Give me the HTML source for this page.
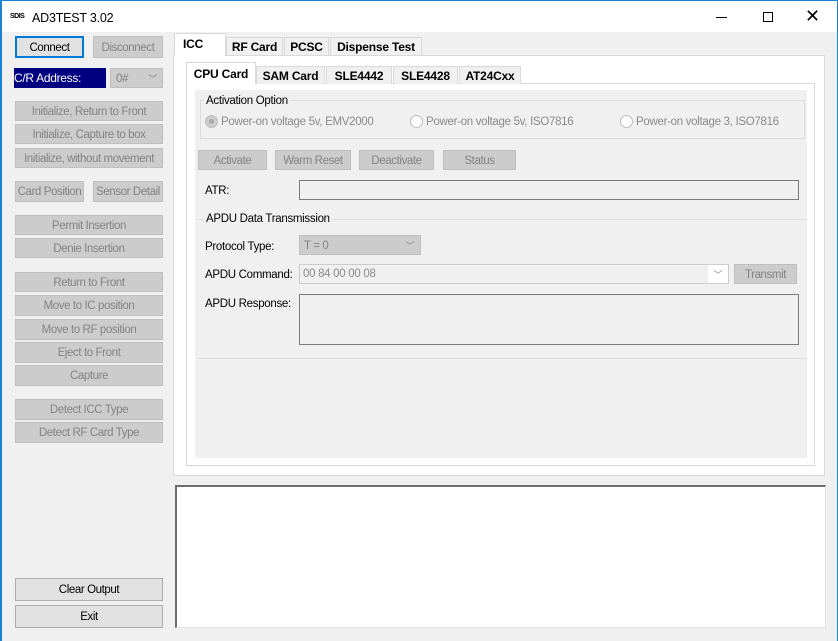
<!DOCTYPE html><html><head><style>
*{margin:0;padding:0;box-sizing:border-box}
body{width:838px;height:641px;background:#f0f0f0;font-family:"Liberation Sans",sans-serif;font-size:12px;position:relative;overflow:hidden;color:#000;white-space:nowrap}
.a{position:absolute}
.b{position:absolute;background:#cccccc;border:1px solid #bfbfbf;color:#838383;text-align:center;display:flex;align-items:center;justify-content:center;font-size:11.5px;letter-spacing:-0.4px;padding-top:1px}
.e{background:#e1e1e1;border-color:#adadad;color:#000}
.t{position:absolute;background:#f0f0f0;border:1px solid #d9d9d9;border-bottom:none;font-weight:bold;font-size:12px;letter-spacing:-0.2px;display:flex;align-items:center;justify-content:center}
.s{background:#fff;font-weight:bold}
.l{position:absolute;font-size:11.5px;letter-spacing:-0.3px;margin-top:2px}
.r{position:absolute;width:13px;height:13px;border-radius:50%;border:1px solid #bcbcbc;background:#fff}
.g{color:#8a8a8a}
</style></head><body>
<div class="a" style="left:0;top:0;width:838px;height:641px;border:1px solid #1883d7;border-left:2px solid #1883d7;border-bottom:none"></div>
<div class="a" style="left:2px;top:1px;width:835px;height:31px;background:#fff"></div>
<div class="a" style="left:10px;top:13px;font-size:7px;font-weight:bold;letter-spacing:-0.5px">SDIS</div>
<div class="a" style="left:32px;top:11px;font-size:12.5px;letter-spacing:-0.2px">AD3TEST 3.02</div>
<div class="a" style="left:716px;top:17px;width:11px;height:1px;background:#000"></div>
<div class="a" style="left:763px;top:12px;width:10px;height:10px;border:1px solid #000"></div>
<div class="a" style="left:805px;top:6px;font-size:18px;font-weight:300">✕</div>

<div class="b e" style="left:15px;top:36px;width:69px;height:22px;border:2px solid #0078d7">Connect</div>
<div class="b" style="left:93px;top:36px;width:70px;height:22px">Disconnect</div>
<div class="a" style="left:14px;top:68px;width:92px;height:20px;background:#000080;color:#fff;padding:3px 0 0 0;font-size:12px;letter-spacing:-0.3px">C/R Address:</div>
<div class="b" style="left:110px;top:68px;width:53px;height:20px;justify-content:flex-start;padding-left:5px">0#<span style="position:absolute;right:5px;font-size:9px">﹀</span></div>
<div class="b" style="left:15px;top:101px;width:148px;height:20px">Initialize, Return to Front</div>
<div class="b" style="left:15px;top:124px;width:148px;height:20px">Initialize, Capture to box</div>
<div class="b" style="left:15px;top:148px;width:148px;height:20px">Initialize, without movement</div>
<div class="b" style="left:15px;top:181px;width:69px;height:21px">Card Position</div>
<div class="b" style="left:93px;top:181px;width:70px;height:21px">Sensor Detail</div>
<div class="b" style="left:15px;top:215px;width:148px;height:20px">Permit Insertion</div>
<div class="b" style="left:15px;top:238px;width:148px;height:20px">Denie Insertion</div>
<div class="b" style="left:15px;top:272px;width:148px;height:20px">Return to Front</div>
<div class="b" style="left:15px;top:295px;width:148px;height:21px">Move to IC position</div>
<div class="b" style="left:15px;top:319px;width:148px;height:21px">Move to RF position</div>
<div class="b" style="left:15px;top:342px;width:148px;height:21px">Eject to Front</div>
<div class="b" style="left:15px;top:365px;width:148px;height:21px">Capture</div>
<div class="b" style="left:15px;top:399px;width:148px;height:21px">Detect ICC Type</div>
<div class="b" style="left:15px;top:422px;width:148px;height:21px">Detect RF Card Type</div>
<div class="b e" style="left:15px;top:578px;width:148px;height:23px">Clear Output</div>
<div class="b e" style="left:15px;top:605px;width:148px;height:23px">Exit</div>

<div class="a" style="left:173px;top:55px;width:652px;height:421px;background:#fff;border:1px solid #d9d9d9"></div>
<div class="t s" style="left:174px;top:33px;width:52px;height:23px;justify-content:flex-start;padding-left:8px;align-items:flex-start;padding-top:3px">ICC</div>
<div class="t" style="left:226px;top:37px;width:57px;height:18px">RF Card</div>
<div class="t" style="left:284px;top:37px;width:45px;height:18px">PCSC</div>
<div class="t" style="left:330px;top:37px;width:92px;height:18px">Dispense Test</div>

<div class="a" style="left:186px;top:83px;width:629px;height:383px;background:#fff;border:1px solid #d9d9d9"></div>
<div class="t s" style="left:186px;top:62px;width:70px;height:22px">CPU Card</div>
<div class="t" style="left:256px;top:66px;width:69px;height:18px">SAM Card</div>
<div class="t" style="left:326px;top:66px;width:66px;height:18px">SLE4442</div>
<div class="t" style="left:393px;top:66px;width:65px;height:18px">SLE4428</div>
<div class="t" style="left:459px;top:66px;width:62px;height:18px">AT24Cxx</div>

<div class="a" style="left:195px;top:90px;width:612px;height:368px;background:#f0f0f0"></div>
<div class="a" style="left:200px;top:100px;width:605px;height:39px;border:1px solid #dcdcdc"></div>
<div class="l" style="left:204px;top:93px;background:#f0f0f0;padding:0 2px">Activation Option</div>
<div class="r" style="left:205px;top:115px;background:#ccc"></div><div class="a" style="left:209px;top:119px;width:5px;height:5px;border-radius:50%;background:#aaa"></div>
<div class="l g" style="left:221px;top:114px">Power-on voltage 5v, EMV2000</div>
<div class="r" style="left:410px;top:115px"></div>
<div class="l g" style="left:426px;top:114px">Power-on voltage 5v, ISO7816</div>
<div class="r" style="left:620px;top:115px"></div>
<div class="l g" style="left:636px;top:114px">Power-on voltage 3, ISO7816</div>

<div class="b" style="left:198px;top:150px;width:69px;height:20px">Activate</div>
<div class="b" style="left:275px;top:150px;width:76px;height:20px">Warm Reset</div>
<div class="b" style="left:359px;top:150px;width:75px;height:20px">Deactivate</div>
<div class="b" style="left:443px;top:150px;width:73px;height:20px">Status</div>

<div class="l" style="left:205px;top:183px">ATR:</div>
<div class="a" style="left:299px;top:180px;width:500px;height:20px;border:1px solid #7a7a7a;background:#f0f0f0"></div>

<div class="a" style="left:198px;top:219px;width:609px;height:140px;border-top:1px solid #dcdcdc;border-bottom:1px solid #dcdcdc"></div>
<div class="l" style="left:204px;top:211px;background:#f0f0f0;padding:0 2px">APDU Data Transmission</div>
<div class="l" style="left:205px;top:239px">Protocol Type:</div>
<div class="b" style="left:299px;top:235px;width:122px;height:20px;justify-content:flex-start;padding-left:4px">T = 0<span style="position:absolute;right:6px;font-size:9px">﹀</span></div>
<div class="l" style="left:205px;top:267px">APDU Command:</div>
<div class="a g" style="left:299px;top:264px;width:430px;height:20px;border:1px solid #ccc;background:#f0f0f0;padding:3px 0 0 3px;font-size:11.5px;letter-spacing:-0.3px">00 84 00 00 08<span style="position:absolute;right:0;top:0;width:20px;height:18px;background:#fff;font-size:9px;text-align:center;padding-top:3px">﹀</span></div>
<div class="b" style="left:734px;top:264px;width:63px;height:20px">Transmit</div>
<div class="l" style="left:205px;top:296px">APDU Response:</div>
<div class="a" style="left:299px;top:294px;width:500px;height:51px;border:1px solid #7a7a7a;background:#f0f0f0"></div>

<div class="a" style="left:175px;top:485px;width:651px;height:143px;background:#fff;border:1px solid #e3e3e3;border-top:2px solid #6d6d6d;border-left:2px solid #6d6d6d"></div>
</body></html>
